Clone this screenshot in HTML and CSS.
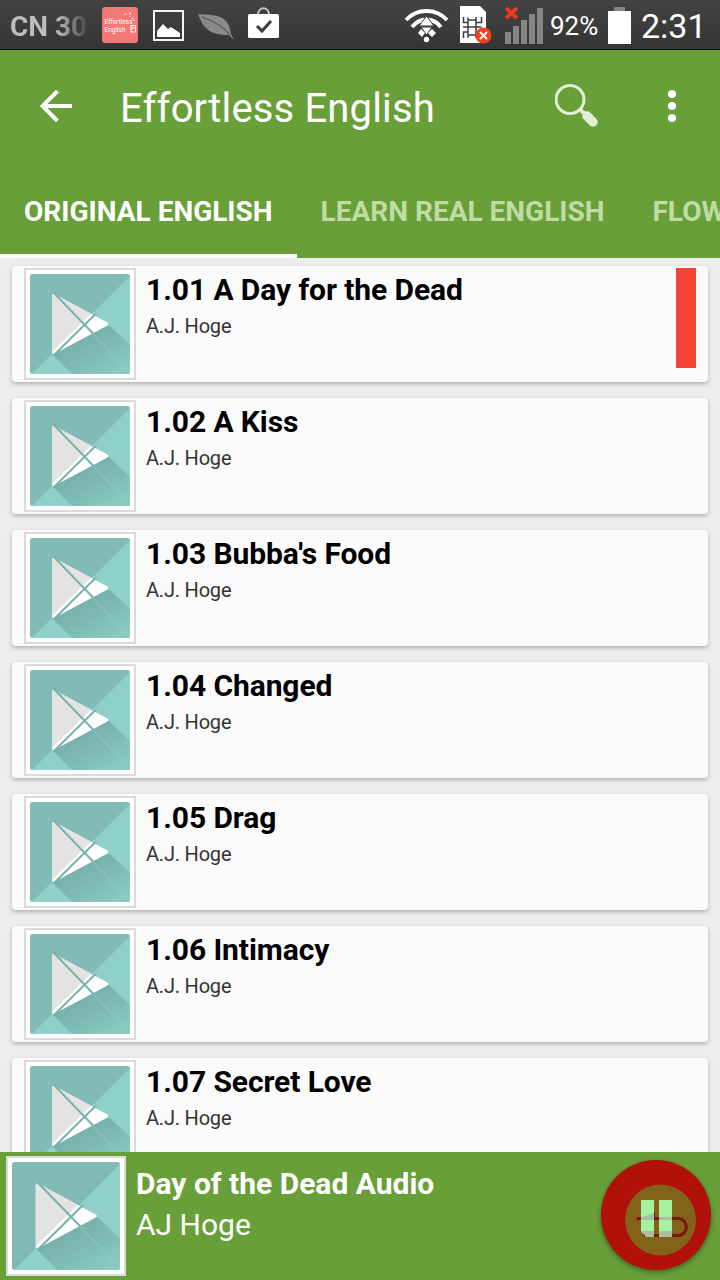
FILE: index.html
```html
<!DOCTYPE html>
<html lang="en">
<head>
    <meta charset="UTF-8">
    <meta name="viewport" content="width=device-width, initial-scale=1.0">
    <title>Effortless English</title>
    <link rel="stylesheet" href="styles.css">
</head>
<body>
    <!-- Shared cover art -->
    <svg class="defs" width="0" height="0">
        <defs>
            <linearGradient id="shade" x1="0.2" y1="0.3" x2="0.8" y2="1">
                <stop offset="0" stop-color="#74aea8"/>
                <stop offset="1" stop-color="#8ac8c1"/>
            </linearGradient>
            <clipPath id="round"><rect width="100" height="100" rx="2.5"/></clipPath>
            <symbol id="cover" viewBox="0 0 100 100">
                <g clip-path="url(#round)">
                    <rect width="100" height="100" fill="#82bbb6"/>
                    <path d="M102 0L0 102H102Z" fill="#8fd0ca"/>
                    <path d="M22 80L42 100H100V71L78 50Z" fill="url(#shade)"/>
                    <path d="M54 51L100 98" stroke="#94cdc7" stroke-width="0.9"/>
                    <path d="M22 21.500Q22 19.500 24 20L77.500 48.500Q79.500 50 77.500 51.500L24 80Q22 80.500 22 78.500Z" fill="#fff"/>
                    <path d="M22 21.500Q22 19.500 24 20L61 39.700L22 78Z" fill="#e3e3e3"/>
                    <path d="M23.500 18.500L63.500 60" stroke="#7cb2ac" stroke-width="2"/>
                    <path d="M24.500 80.500L65.500 40" stroke="#7cb2ac" stroke-width="2"/>
                </g>
            </symbol>
        </defs>
    </svg>

    <div class="status-bar">
        <span class="ticker">CN 30</span>
        <svg class="notifications" width="200" height="50" viewBox="96 0 200 50">
            <rect x="102" y="7" width="36" height="36" rx="3" fill="#f37878"/>
            <g class="app-label">
                <text x="104.500" y="24" textLength="28" lengthAdjust="spacingAndGlyphs">Effortless</text>
                <text x="104.500" y="32" textLength="21" lengthAdjust="spacingAndGlyphs">English</text>
            </g>
            <path d="M124.500 14h2M130 12v3M130 16v1M132 18l3 3M131 25.500h4.500v6.500h-4.500zM131 28h4" fill="none" stroke="#fff" stroke-width="1"/>
            <rect x="154" y="11" width="29" height="29" fill="none" stroke="#f4f4f4" stroke-width="2"/>
            <path d="M157 37V31L163 24L168 29L171 27L180 33V37Z" fill="#fff"/>
            <path d="M198 14C207 15 220 14 226 21C230 26 230 30 231 34L234 40L229 35C220 35 212 34 206 28C201 23 200 18 198 14Z" fill="#8a8a8a"/>
            <path d="M202 17C211 20 222 25 230 35" fill="none" stroke="#555" stroke-width="1.200"/>
            <path d="M258 15C258 6 269 6 269 15" fill="none" stroke="#c4c4c4" stroke-width="2"/>
            <rect x="248" y="14" width="31" height="24" rx="1.500" fill="#fff"/>
            <path d="M257 26L262 31L271 21" fill="none" stroke="#3c3c3c" stroke-width="3"/>
        </svg>
        <svg class="signals" width="144" height="50" viewBox="402 0 144 50">
            <g fill="none" stroke="#fff">
                <path d="M406 20C417 8 436 8 447 20" stroke-width="4"/>
                <path d="M412 27C420 17 433 17 441 27" stroke-width="4"/>
            </g>
            <path d="M426.500 16L434 26H419Z" fill="#fff" stroke="#3b3b3b"/>
            <path d="M421 27H432L426.500 35Z" fill="#fff" stroke="#3b3b3b"/>
            <path d="M421 29l4 4-3 4-4-4zM432 29l4 4-4 4-4-4z" fill="#fff"/>
            <circle cx="426.500" cy="39.500" r="2.700" fill="#fff"/>
            <path d="M460 6H480L486 12V43H460Z" fill="#fff"/>
            <!-- SIM contacts -->
            <path d="M463.500 17v5.500h4.500v-5M468 20h8M476 17v5.500h5.500V17M463 27h18.500M468 22v5M476 22v5M463.500 38v-6h4.500v6M468 35h8M476 32v6M468 27v5M476 27v5" fill="none" stroke="#3c3c3c" stroke-width="1.500"/>
            <circle cx="483.500" cy="35.500" r="8" fill="#f4401c"/>
            <path d="M480 32l7 7M487 32l-7 7" stroke="#fff" stroke-width="2"/>
            <path d="M505 32h6v12h-6zM513 26h6v18h-6zM521 20h6v24h-6zM529 14h6v30h-6zM537 8h6v36h-6z" fill="#868686"/>
            <path d="M506 8l11 10M517 8l-11 10" stroke="#f0391c" stroke-width="3.800"/>
        </svg>
        <span class="percent">92%</span>
        <svg class="battery" width="24" height="50" viewBox="0 0 24 50">
            <rect x="6" y="7" width="11" height="4" fill="#858585"/>
            <rect y="11" width="23" height="33" fill="#fff"/>
        </svg>
        <span class="clock">2:31</span>
    </div>

    <header class="app-header">
        <div class="toolbar">
            <svg class="back" width="32" height="32" viewBox="0 0 32 32">
                <path d="M17.500 1L2.500 16L17.500 31M2 16H32" fill="none" stroke="#fff" stroke-width="4"/>
            </svg>
            <h1>Effortless English</h1>
            <svg class="search" width="44" height="44" viewBox="0 0 44 44">
                <circle cx="15" cy="15.500" r="14" fill="none" stroke="#e1efd6" stroke-width="3"/>
                <path d="M24.500 25L30 30" stroke="#e1efd6" stroke-width="4"/>
                <path d="M32 32L38 38" stroke="#e1efd6" stroke-width="9.500" stroke-linecap="round"/>
            </svg>
            <svg class="more" width="8" height="32" viewBox="0 0 8 32">
                <g fill="#fff"><circle cx="4" cy="4" r="4"/><circle cx="4" cy="16" r="4"/><circle cx="4" cy="28" r="4"/></g>
            </svg>
        </div>
        <nav class="tabs">
            <a class="tab active">ORIGINAL ENGLISH</a>
            <a class="tab">LEARN REAL ENGLISH</a>
            <a class="tab">FLOW</a>
        </nav>
    </header>

    <main class="list">
        <div class="card">
            <svg class="thumb"><use href="#cover"/></svg>
            <div class="info"><h2>1.01 A Day for the Dead</h2><p>A.J. Hoge</p></div>
            <span class="marker"></span>
        </div>
        <div class="card">
            <svg class="thumb"><use href="#cover"/></svg>
            <div class="info"><h2>1.02 A Kiss</h2><p>A.J. Hoge</p></div>
        </div>
        <div class="card">
            <svg class="thumb"><use href="#cover"/></svg>
            <div class="info"><h2>1.03 Bubba's Food</h2><p>A.J. Hoge</p></div>
        </div>
        <div class="card">
            <svg class="thumb"><use href="#cover"/></svg>
            <div class="info"><h2>1.04 Changed</h2><p>A.J. Hoge</p></div>
        </div>
        <div class="card">
            <svg class="thumb"><use href="#cover"/></svg>
            <div class="info"><h2>1.05 Drag</h2><p>A.J. Hoge</p></div>
        </div>
        <div class="card">
            <svg class="thumb"><use href="#cover"/></svg>
            <div class="info"><h2>1.06 Intimacy</h2><p>A.J. Hoge</p></div>
        </div>
        <div class="card">
            <svg class="thumb"><use href="#cover"/></svg>
            <div class="info"><h2>1.07 Secret Love</h2><p>A.J. Hoge</p></div>
        </div>
    </main>

    <footer class="player">
        <svg class="thumb large"><use href="#cover"/></svg>
        <div class="now-playing">
            <h3>Day of the Dead Audio</h3>
            <p>AJ Hoge</p>
        </div>
        <button class="pause">
            <svg width="110" height="110" viewBox="0 0 110 110">
                <circle cx="59.500" cy="60" r="35.500" fill="#83631a"/>
                <path d="M36 58.500H77C88 58.500 88 75.500 77 75.500H43" fill="none" stroke="#7c1609" stroke-width="3"/>
                <path d="M35 59.500L54 52V60Z" fill="#7c1609"/>
                <path d="M40 40h13v32h-13zM58 40h13v32h-13z" fill="#a5f3a2"/>
                <path d="M40 57.500L53 53V60H40ZM58 57H71V60H58ZM44 74H53V77H44ZM40 71H53V75H44L40 72ZM58 71H71V77H58Z" fill="#a9bfa2"/>
            </svg>
        </button>
    </footer>
</body>
</html>
```
FILE: styles.css
```css
/* General Styles */
* {
    margin: 0;
    padding: 0;
    box-sizing: border-box;
}

body {
    font-family: Roboto, sans-serif;
    background: #ededed;
    width: 720px;
    height: 1280px;
    display: flex;
    flex-direction: column;
    overflow: hidden;
}

svg {
    display: block;
    flex: none;
}

.defs {
    position: absolute;
}

/* Status bar */
.status-bar {
    height: 50px;
    flex: none;
    display: flex;
    align-items: center;
    background: linear-gradient(#434343, #353535);
    border-bottom: 1px solid #111;
    color: #fff;
    white-space: nowrap;
}

.ticker {
    width: 88px;
    margin-right: 8px;
    padding: 3px 0 0 10px;
    font-size: 28px;
    font-weight: 700;
    background: linear-gradient(90deg, #bdbdbd 65%, #444 100%);
    background-clip: text;
    -webkit-background-clip: text;
    color: transparent;
}

.app-label {
    font-size: 7px;
    fill: #fff;
}

.signals {
    margin-left: 106px;
}

.percent {
    width: 58px;
    margin-left: 4px;
    padding-top: 3px;
    font-size: 26px;
}

.battery {
    margin-right: 9px;
}

.clock {
    padding-top: 3px;
    font-size: 34px;
}

/* Header */
.app-header {
    height: 208px;
    flex: none;
    background: #689f38;
    color: #fff;
}

.toolbar {
    height: 112px;
    display: flex;
    align-items: center;
    padding: 0 44px 0 40px;
}

.toolbar h1 {
    flex: 1;
    padding: 5px 0 0 48px;
    font-size: 40px;
    font-weight: 400;
    line-height: 48px;
    letter-spacing: 0.15px;
}

.search {
    margin-right: 69px;
}

.tabs {
    height: 96px;
    display: flex;
    overflow: hidden;
}

.tab {
    flex: none;
    padding: 34px 24px 0;
    font-size: 28px;
    font-weight: 700;
    line-height: 32px;
    color: #c0dba4;
}

.tab.active {
    color: #fff;
    border-bottom: 4px solid #fff;
}

/* List */
.list {
    flex: 1;
    min-height: 0;
    overflow: hidden;
    padding: 8px 12px 0;
}

.card {
    height: 116px;
    margin-bottom: 16px;
    padding: 2px 12px;
    display: flex;
    background: #fafafa;
    border-radius: 4px;
    box-shadow: 0 2px 4px rgba(0, 0, 0, 0.25);
}

.thumb {
    width: 112px;
    height: 112px;
    padding: 4px;
    background: #fff;
    border: 2px solid #dadada;
}

.info {
    flex: 1;
    padding: 4px 0 0 10px;
}

.info h2 {
    font-size: 30px;
    font-weight: 700;
    line-height: 36px;
    letter-spacing: -0.08px;
    color: #000;
}

.info p {
    margin-top: 6px;
    font-size: 20px;
    line-height: 24px;
    letter-spacing: -0.2px;
    color: #333;
}

.marker {
    width: 20px;
    height: 100px;
    background: #f44336;
}

/* Player */
.player {
    height: 128px;
    flex: none;
    display: flex;
    padding: 4px 9px 4px 6px;
    background: #689f38;
    color: #fff;
}

.thumb.large {
    width: 120px;
    height: 120px;
}

.now-playing {
    flex: 1;
    padding: 10px 0 0 10px;
}

.now-playing h3 {
    font-size: 30px;
    font-weight: 700;
    line-height: 36px;
}

.now-playing p {
    margin-top: 5px;
    font-size: 30px;
    line-height: 36px;
}

.pause {
    width: 110px;
    height: 110px;
    margin-top: 4px;
    border: none;
    border-radius: 50%;
    background: #b01209;
    box-shadow: 0 2px 5px rgba(0, 0, 0, 0.4);
}
```
